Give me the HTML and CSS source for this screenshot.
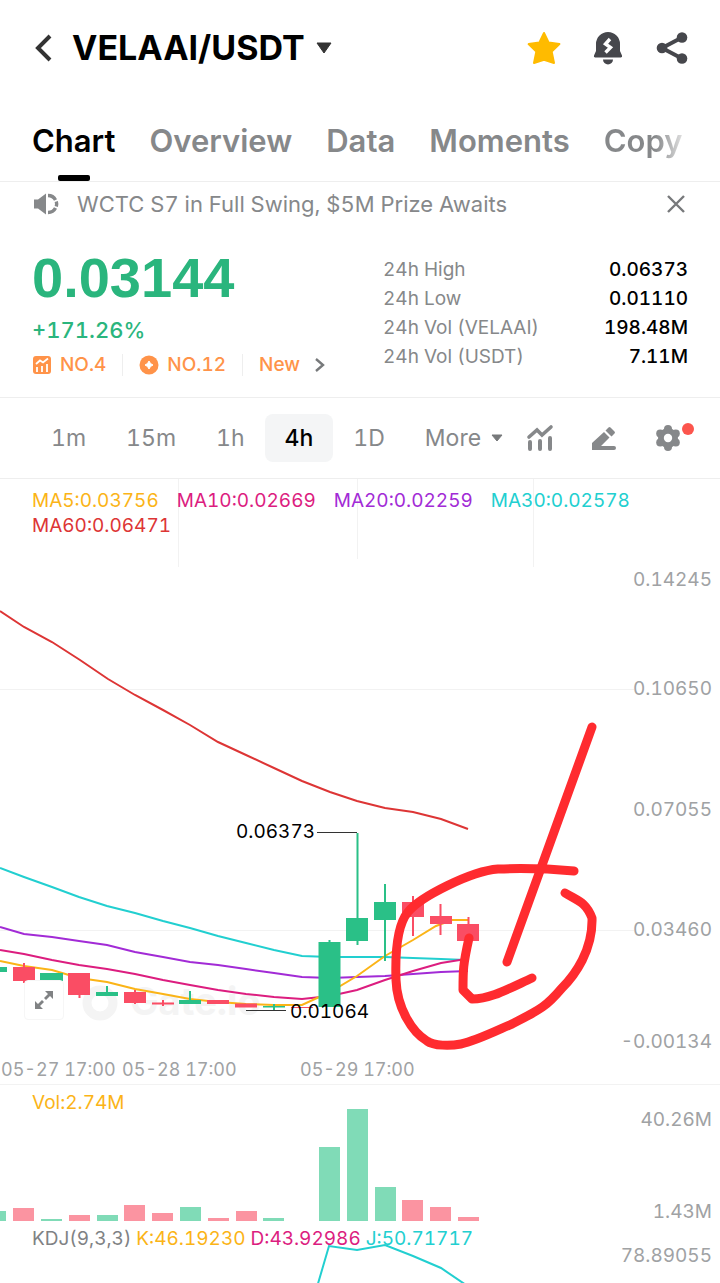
FILE: index.html
```html
<!DOCTYPE html>
<html lang="en">
<head>
    <meta charset="UTF-8">
    <meta name="viewport" content="width=device-width, initial-scale=1.0">
    <title>VELAAI/USDT</title>
    <link rel="stylesheet" href="styles.css">
</head>
<body>
    <header class="topbar">
        <button class="icon-btn" aria-label="Back">
            <svg width="24" height="32" viewBox="0 0 24 32"><path d="M18 4 6 16l12 12" fill="none" stroke="#333" stroke-width="4"/></svg>
        </button>
        <button class="pair">
            <h1>VELAAI/USDT</h1>
            <svg width="16" height="12" viewBox="0 0 16 12"><path d="M1 1h14L8 11z" fill="#333" stroke="#333" stroke-linejoin="round"/></svg>
        </button>
        <div class="actions">
            <button class="icon-btn" aria-label="Favorite">
                <svg width="36" height="36" viewBox="0 0 36 36"><path d="m18 3 4.700 9.600 10.700 1.500-7.700 7.500 2.300 11.400L18 29.800l-10 3.200 2.300-11.400-7.700-7.500 10.700-1.500z" fill="#fb0" stroke="#fb0" stroke-width="2" stroke-linejoin="round"/></svg>
            </button>
            <button class="icon-btn" aria-label="Price alert">
                <svg width="36" height="36" viewBox="0 0 36 36">
                    <path d="M6 14a12 12 0 0 1 24 0v7l2 4.500a1.500 1.500 0 0 1-1 2H5a1.500 1.500 0 0 1-1-2L6 21zM13 29.500h10a5 5 0 0 1-10 0z" fill="#46474c"/>
                    <path d="m20 9-4.500 5 5 3.500-5 5" fill="none" stroke="#fff" stroke-width="3.400"/>
                </svg>
            </button>
            <button class="icon-btn" aria-label="Share">
                <svg width="36" height="36" viewBox="0 0 36 36">
                    <path d="M28 7.500 8 18l20 10.500" fill="none" stroke="#46474c" stroke-width="4"/>
                    <g fill="#46474c"><circle cx="28" cy="7.500" r="5.300"/><circle cx="8" cy="18" r="5.300"/><circle cx="28" cy="28.500" r="5.300"/></g>
                </svg>
            </button>
        </div>
    </header>

    <nav class="tabs">
        <a class="active" href="#chart">Chart</a>
        <a href="#overview">Overview</a>
        <a href="#data">Data</a>
        <a href="#moments">Moments</a>
        <a href="#copy">Copy</a>
    </nav>

    <div class="notice">
        <svg width="28" height="24" viewBox="0 0 28 24">
            <path d="M2 7.500h4l8-6v21l-8-6H2z" fill="#86888a"/>
            <path d="M16 3.500c4 0 6 1.500 7.500 4.500M16 20.500c4 0 6-1.500 7.500-4.500M24.300 9.500q.8 2.500 0 5" fill="none" stroke="#86888a" stroke-width="3.400"/>
        </svg>
        <p>WCTC S7 in Full Swing, $5M Prize Awaits</p>
        <button class="icon-btn" aria-label="Close">
            <svg width="24" height="24" viewBox="0 0 24 24"><path d="m4 4 16 16M20 4 4 20" fill="none" stroke="#77797b" stroke-width="2.400"/></svg>
        </button>
    </div>

    <section class="summary">
        <div class="quote">
            <div class="price">0.03144</div>
            <div class="change">+171.26%</div>
            <div class="tags">
                <a href="#hot">
                    <svg width="20" height="20" viewBox="0 0 20 20">
                        <rect x="1" y="1" width="18" height="18" rx="3" fill="#ff9349"/>
                        <path d="m4 9 4-3.500 3 2L16 3.500M5 12v5M10 11v6M15 9v8" fill="none" stroke="#fff" stroke-width="1.800"/>
                    </svg>
                    NO.4
                </a>
                <a href="#coin">
                    <svg width="20" height="20" viewBox="0 0 20 20">
                        <circle cx="10" cy="10" r="9.500" fill="#ff9349"/>
                        <path d="m10 6 1.500 2.500L14 10l-2.500 1.500L10 14l-1.500-2.500L6 10l2.500-1.500z" fill="#fff" stroke="#fff"/>
                    </svg>
                    NO.12
                </a>
                <a href="#new">
                    New
                    <svg class="more" width="12" height="16" viewBox="0 0 12 16"><path d="m2 2 7 6-7 6" fill="none" stroke="#77797b" stroke-width="2.400"/></svg>
                </a>
            </div>
        </div>
        <dl class="stats">
            <dt>24h High</dt><dd>0.06373</dd>
            <dt>24h Low</dt><dd>0.01110</dd>
            <dt>24h Vol (VELAAI)</dt><dd>198.48M</dd>
            <dt>24h Vol (USDT)</dt><dd>7.11M</dd>
        </dl>
    </section>

    <div class="toolbar">
        <button>1m</button>
        <button>15m</button>
        <button>1h</button>
        <button class="active">4h</button>
        <button>1D</button>
        <button class="dropdown">More
            <svg width="12" height="8" viewBox="0 0 12 8"><path d="M1 1h10L6 7z" fill="#77797b" stroke="#77797b" stroke-linejoin="round"/></svg>
        </button>
        <div class="tools">
            <button class="icon-btn" aria-label="Indicators">
                <svg width="28" height="28" viewBox="0 0 28 28">
                    <path d="M3 13 11 6l5 5 9-8" fill="none" stroke="#86888a" stroke-width="3.600" stroke-linecap="round"/>
                    <path d="M4 18v7M14 17v8M24 14v11" fill="none" stroke="#86888a" stroke-width="4" stroke-linecap="round"/>
                </svg>
            </button>
            <button class="icon-btn" aria-label="Draw">
                <svg width="28" height="28" viewBox="0 0 28 28">
                    <path d="M2 19 14 8l5.500 5.500-8.500 8.500h13a2 2 0 0 1 0 4H2zM15.500 6.500l3-3q1-1 2 0l4 4q1 1 0 2l-3 3z" fill="#86888a"/>
                </svg>
            </button>
            <button class="icon-btn settings" aria-label="Settings">
                <svg width="28" height="28" viewBox="0 0 28 28">
                    <g fill="#86888a">
                        <circle cx="14" cy="14" r="10"/>
                        <circle cx="14" cy="5" r="4"/>
                        <circle cx="21.800" cy="9.500" r="4"/>
                        <circle cx="21.800" cy="18.500" r="4"/>
                        <circle cx="14" cy="23" r="4"/>
                        <circle cx="6.200" cy="18.500" r="4"/>
                        <circle cx="6.200" cy="9.500" r="4"/>
                    </g>
                    <circle cx="14" cy="14" r="4.200" fill="#fff"/>
                </svg>
                <span class="dot"></span>
            </button>
        </div>
    </div>

    <main>
        <section class="panel">
            <svg class="plot" viewBox="0 479 720 605">
                <path class="grid" d="M0 689.500H634M0 930.500H634M178.500 479v88M357.500 479v80M533.500 479v88"/>
                <g class="watermark">
                    <circle cx="100" cy="1003" r="13"/>
                    <text x="130" y="1015">Gate.io</text>
                </g>

                <polyline class="line ma60" points="0,611 24,627 52,642 80,660 108,679 135,695 163,710 190,725 218,742 246,755 274,768 302,781 330,792 357,801 385,808 413,812 441,819 468,829"/>
                <polyline class="line ma30" points="0,868 24,877 52,887 79,897 107,906 135,913 163,921 190,928 218,936 246,943 274,950 302,956 330,957 385,957 413,958 441,959 466,960"/>
                <polyline class="line ma20" points="0,927 24,934 52,937 79,941 107,945 135,952 163,957 190,962 218,965 246,969 274,973 302,977 330,978 357,977 385,976 413,974 441,972 468,971"/>
                <polyline class="line ma10" points="0,950 24,954 52,960 79,965 107,969 135,974 163,980 190,985 218,990 246,994 274,997 302,999 330,996 357,990 385,980 413,971 441,963 466,959"/>
                <polyline class="line ma5" points="0,961 24,966 52,970 79,978 107,982 135,989 163,994 190,999 218,1002 246,1004 274,1005 302,1005 330,992 357,976 385,956 413,940 436,926 452,920 468,920"/>

                <g class="up">
                    <path class="wick" d="M107 986v10M190 991v12M274 1004v6M329.500 940v4M357.500 833v112M385 884v77"/>
                    <path d="M0 967h7v5H0zM40 973h23v8H40zM96 992h22v4H96zM179 1000h22v4h-22zM263 1006h22v1.500h-22zM318.500 942h22v65h-22zM346 918h22v23h-22zM374 902h22v18h-22z"/>
                </g>
                <g class="down">
                    <path class="wick" d="M24 963v20M79.500 990v8M135 990v14M163 1000v6M413 896v40M440.500 904v31M468.500 917v12"/>
                    <path d="M13 967h22v14H13zM68 973h22v22H68zM124 992h22v11h-22zM152 1002.500h22v2h-22zM207 1000h22v4h-22zM235 1003.500h22v4h-22zM291 1007h22v1h-22zM402 902h22v15h-22zM430 916h22v8h-22zM457 924h22v17h-22z"/>
                </g>

                <path class="leader" d="M317 832.500h40M246 1010.500h40"/>
                <text class="mark" x="236" y="838">0.06373</text>
                <text class="mark" x="290" y="1018">0.01064</text>

                <g class="axis" text-anchor="end">
                    <text x="712" y="586">0.14245</text>
                    <text x="712" y="695">0.10650</text>
                    <text x="712" y="816">0.07055</text>
                    <text x="712" y="936">0.03460</text>
                    <text x="712" y="1048">-0.00134</text>
                </g>
                <g class="axis dates">
                    <text x="1" y="1076">05-27 17:00</text>
                    <text x="122" y="1076">05-28 17:00</text>
                    <text x="300" y="1076">05-29 17:00</text>
                </g>

                <g class="marker">
                    <path d="M592 727 507 962"/>
                    <path d="M574 871C552 869 524 868 498 869C471 871 420 897 408 912C398 924 395 950 396 980C397 1008 412 1032 427 1041C434 1046 450 1046 461 1044C476 1041 500 1029 512 1024C539 1010 545 1008 562 988C575 975 593 950 592 918C586 902 578 901 565 893"/>
                    <path d="M469 938C463 965 463 970 463 990L472 999C490 999 506 990 532 978"/>
                </g>
            </svg>
            <div class="legend">
                <span class="ma5">MA5:0.03756</span>
                <span class="ma10">MA10:0.02669</span>
                <span class="ma20">MA20:0.02259</span>
                <span class="ma30">MA30:0.02578</span>
                <span class="ma60">MA60:0.06471</span>
            </div>
            <button class="expand" aria-label="Full screen">
                <svg width="20" height="20" viewBox="0 0 20 20"><path d="M11 1h8v8l-3-3-4 4-2-2 4-4zM9 19H1v-8l3 3 4-4 2 2-4 4z" fill="#808284"/></svg>
            </button>
        </section>

        <section class="panel volume">
            <svg class="plot" viewBox="0 1085 720 137">
                <path class="vol-up" d="M0 1211h6v10H0zM41 1219h21v2H41zM97 1215h21v6H97zM180 1207h21v14h-21zM263 1218h21v3h-21zM319 1147h21v74h-21zM347 1109h21v112h-21zM375 1187h21v34h-21z"/>
                <path class="vol-down" d="M13 1208h21v13H13zM69 1215h21v6H69zM124 1205h21v16h-21zM152 1213h21v8h-21zM208 1218h21v3h-21zM236 1211h21v10h-21zM402 1200h21v21h-21zM430 1207h21v14h-21zM458 1217h21v4h-21z"/>
                <g class="axis" text-anchor="end">
                    <text x="712" y="1126">40.26M</text>
                    <text x="712" y="1218">1.43M</text>
                </g>
            </svg>
            <div class="legend"><span class="ma5">Vol:2.74M</span></div>
        </section>

        <section class="panel kdj">
            <svg class="plot" viewBox="0 1222 720 61">
                <polyline class="line ma30" points="317,1287 329,1246 357,1250 385,1245 413,1256 441,1268 469,1287"/>
                <text class="axis" text-anchor="end" x="712" y="1262">78.89055</text>
            </svg>
            <div class="legend">
                <span>KDJ(9,3,3)</span>
                <span class="ma5">K:46.19230</span>
                <span class="ma10">D:43.92986</span>
                <span class="ma30">J:50.71717</span>
            </div>
        </section>
    </main>
</body>
</html>
```
FILE: styles.css
```css
* {
    box-sizing: border-box;
}
body {
    margin: 0;
    background-color: #fff;
    color: #000;
    font-family: Inter, "Liberation Sans", sans-serif;
    font-variant-numeric: tabular-nums;
    overflow-x: hidden;
}
h1, p, dl, dd {
    margin: 0;
}
button {
    border: none;
    padding: 0;
    background: none;
    color: inherit;
    font: inherit;
    font-variant-numeric: inherit;
    cursor: pointer;
}
a {
    color: inherit;
    text-decoration: none;
}
svg {
    display: block;
}

/* header */
.topbar {
    display: flex;
    align-items: center;
    height: 96px;
    padding: 0 30px 0 32px;
}
.pair {
    display: flex;
    align-items: center;
    gap: 11px;
    margin-left: 16px;
}
h1 {
    font-size: 34px;
    font-weight: 700;
    line-height: 40px;
}
.actions {
    display: flex;
    gap: 28px;
    margin-left: auto;
}
.tabs {
    display: flex;
    gap: 34px;
    height: 86px;
    padding: 0 32px;
    border-bottom: 1px solid #eee;
    color: #86888a;
    font-size: 31px;
    font-weight: 600;
    line-height: 90px;
    white-space: nowrap;
}
.tabs a:last-child {
    background: linear-gradient(to right, #86888a 65%, #ddd 100%);
    background-clip: text;
    color: transparent;
}
.tabs .active {
    position: relative;
    color: #000;
}
.tabs .active::after {
    content: "";
    position: absolute;
    left: 50%;
    bottom: 0;
    width: 32px;
    height: 6px;
    margin-left: -16px;
    border-radius: 2px;
    background-color: #000;
}
.notice {
    display: flex;
    align-items: center;
    gap: 17px;
    height: 44px;
    padding: 0 32px;
    color: #86888a;
    font-size: 22px;
}
.notice .icon-btn {
    margin-left: auto;
}

/* price summary */
.summary {
    display: flex;
    justify-content: space-between;
    height: 172px;
    padding: 24px 32px 0;
    border-bottom: 1px solid #eee;
}
.price {
    color: #2ab57d;
    font-family: "Liberation Sans", Arial, sans-serif;
    font-size: 56px;
    font-weight: 700;
    line-height: 56px;
}
.change {
    margin-top: 10px;
    color: #2ab57d;
    font-size: 22px;
    font-weight: 500;
    line-height: 28px;
}
.tags {
    display: flex;
    margin-top: 10px;
    color: #ff9349;
    font-size: 19px;
    font-weight: 500;
    line-height: 22px;
}
.tags a {
    display: flex;
    align-items: center;
    gap: 8px;
}
.tags a + a {
    margin-left: 16px;
    padding-left: 16px;
    border-left: 1px solid #eee;
}
.tags .more {
    margin-left: 6px;
}
.stats {
    display: grid;
    grid-template-columns: auto auto;
    align-content: start;
    width: 305px;
    padding-top: 5px;
    font-size: 19px;
    line-height: 29px;
}
.stats dt {
    color: #86888a;
}
.stats dd {
    font-weight: 500;
    text-align: right;
}

/* timeframes */
.toolbar {
    display: flex;
    align-items: center;
    height: 81px;
    padding: 0 24px 0 31px;
    border-bottom: 1px solid #eee;
    color: #86888a;
    font-size: 23px;
}
.toolbar > button {
    height: 48px;
    padding: 0 20px;
    border-radius: 8px;
}
.toolbar > .active {
    background-color: #f4f5f6;
    color: #000;
    font-weight: 500;
}
.toolbar > .dropdown {
    display: flex;
    align-items: center;
    gap: 10px;
}
.tools {
    display: flex;
    gap: 36px;
    margin-left: auto;
    padding-right: 14px;
}
.settings {
    position: relative;
}
.dot {
    position: absolute;
    top: -1px;
    right: -12px;
    width: 12px;
    height: 12px;
    border-radius: 50%;
    background-color: #fc554d;
}

/* chart panels: plot and legend share one cell */
.panel {
    display: grid;
    position: relative;
    border-bottom: 1px solid #f2f2f2;
}
.panel + .panel {
    border-bottom: none;
}
.plot, .legend {
    grid-area: 1 / 1;
}
.plot {
    width: 100%;
    height: auto;
}
.legend {
    display: flex;
    flex-wrap: wrap;
    align-content: start;
    gap: 0 18px;
    padding: 9px 32px 0;
    color: #808284;
    font-size: 19px;
    line-height: 25px;
}
.volume .legend {
    padding-top: 5px;
}
.kdj .legend {
    gap: 5px;
    padding-top: 4px;
}
.expand {
    display: flex;
    align-items: center;
    justify-content: center;
    position: absolute;
    left: 24px;
    bottom: 64px;
    width: 40px;
    height: 40px;
    border: 1px solid #f6f6f6;
    border-radius: 4px;
}
.grid {
    fill: none;
    stroke: #f2f2f2;
}
.line {
    fill: none;
    stroke: currentColor;
    stroke-width: 2;
}
.ma5 { color: #fbb417; }
.ma10 { color: #dc1d7f; }
.ma20 { color: #a22bd6; }
.ma30 { color: #22cfd0; }
.ma60 { color: #dd3535; }
.up { fill: #2ac087; }
.down { fill: #fa4d64; }
.wick { stroke-width: 2; }
.up .wick { stroke: #2ac087; }
.down .wick { stroke: #fa4d64; }
.vol-up { fill: #80dbb7; }
.vol-down { fill: #fb94a1; }
.leader {
    stroke: #333;
}
.mark {
    font-size: 19px;
}
.axis {
    fill: #a0a2a4;
    font-size: 19px;
}
.dates {
    font-size: 18px;
}
.watermark {
    fill: #f4f4f4;
    font-size: 38px;
    font-weight: 700;
}
.watermark circle {
    fill: none;
    stroke: #f4f4f4;
    stroke-width: 9;
}
.marker {
    fill: none;
    stroke: #ff2b2f;
    stroke-width: 9;
    stroke-linecap: round;
    stroke-linejoin: round;
}
```
